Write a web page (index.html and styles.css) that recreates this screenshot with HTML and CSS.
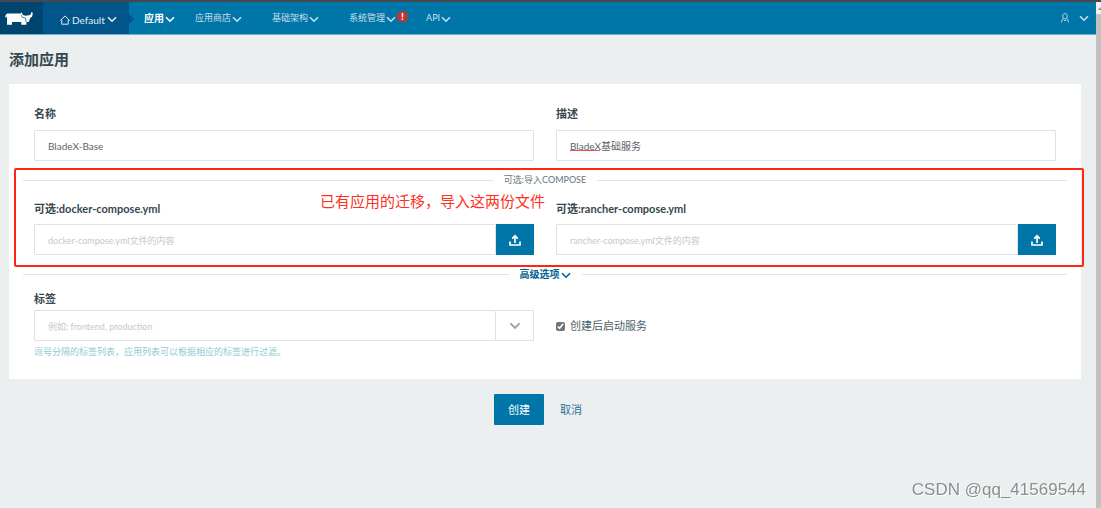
FILE: index.html
```html
<!DOCTYPE html>
<html>
<head>
<meta charset="utf-8">
<title>添加应用</title>
<link rel="stylesheet" href="styles.css">
</head>
<body>
<svg class="defs" aria-hidden="true">
  <symbol id="chevron" viewBox="0 0 10 7"><path d="M1 1.2 5 5.2 9 1.2" fill="none" stroke="currentColor" stroke-width="1.6"/></symbol>
  <symbol id="upload" viewBox="0 0 12 12"><path d="M1 7.500V11h10V7.500M6 9V2M3.200 4.600 6 1.800l2.800 2.800" fill="none" stroke="currentColor" stroke-width="1.700"/></symbol>
</svg>
<div class="window">
  <div class="page">
    <header class="nav">
      <a class="logo" href="#" aria-label="Rancher">
        <svg width="28" height="14" viewBox="0 0 28 14"><path fill="#fff" d="M0 5.200 .9 2.500 2.400 1.600H15.600L16 .6 17 1 17.800 3 20.500 3.800 25.200 3 26.600 0 27.800 .8 27.200 4.400 25.200 6 24.400 8.200 23.600 10H21.400V12.800H16.200V10H7V12.800H2V8.200L2 4.200 1.200 5.600Z"/><path d="M15.900 2.800 17.200 5.200 20.600 6.200 21 10" fill="none" stroke="#00456f" stroke-width=".7"/></svg>
      </a>
      <button class="env" type="button">
        <svg width="10" height="10" viewBox="0 0 10 10"><path d="M.6 5.300 5 .9l4.400 4.400H8.200v3.900H1.800V5.300Z" fill="none" stroke="currentColor"/></svg>
        <span>Default</span>
        <svg class="chev"><use href="#chevron"/></svg>
      </button>
      <nav class="menu">
        <a class="item active" href="#">应用<svg class="chev"><use href="#chevron"/></svg></a>
        <a class="item" href="#">应用商店<svg class="chev"><use href="#chevron"/></svg></a>
        <a class="item" href="#">基础架构<svg class="chev"><use href="#chevron"/></svg></a>
        <a class="item" href="#">系统管理<svg class="chev"><use href="#chevron"/></svg><span class="alert">!</span></a>
        <a class="item" href="#">API<svg class="chev"><use href="#chevron"/></svg></a>
      </nav>
      <button class="user" type="button" aria-label="User">
        <svg width="8" height="10" viewBox="0 0 8 10"><path d="M4 .6C2.600.6 1.700 1.600 1.700 3c0 1.500 1 2.900 2.300 2.900S6.300 4.500 6.300 3C6.300 1.600 5.400.6 4 .6ZM2.600 5.400.9 6.800.6 9.500M5.400 5.400 7.100 6.800l.3 2.700M2.600 6.800 4 8l1.400-1.200" fill="none" stroke="currentColor" stroke-width=".9"/></svg>
        <svg class="chev"><use href="#chevron"/></svg>
      </button>
    </header>
    <main class="content">
      <h1>添加应用</h1>
      <form>
        <div class="panel">
          <div class="columns">
            <div class="field">
              <label for="name">名称</label>
              <input class="text" id="name" type="text" value="BladeX-Base">
            </div>
            <div class="field">
              <label for="desc">描述</label>
              <div class="spelled">
                <input class="text" id="desc" type="text" value="BladeX基础服务" spellcheck="false">
                <span class="typo"></span>
              </div>
            </div>
          </div>
          <section class="compose">
            <div class="divider"><span>可选:导入COMPOSE</span></div>
            <div class="columns">
              <div class="field">
                <label for="docker">可选:docker-compose.yml</label>
                <div class="group">
                  <input class="text" id="docker" type="text" placeholder="docker-compose.yml文件的内容">
                  <button class="upload" type="button" aria-label="Upload"><svg width="12" height="12"><use href="#upload"/></svg></button>
                </div>
              </div>
              <div class="field">
                <label for="rancher">可选:rancher-compose.yml</label>
                <div class="group">
                  <input class="text" id="rancher" type="text" placeholder="rancher-compose.yml文件的内容">
                  <button class="upload" type="button" aria-label="Upload"><svg width="12" height="12"><use href="#upload"/></svg></button>
                </div>
              </div>
            </div>
            <p class="note">已有应用的迁移，导入这两份文件</p>
          </section>
          <div class="divider advanced"><button type="button">高级选项<svg class="chev"><use href="#chevron"/></svg></button></div>
          <div class="columns tags">
            <div class="field">
              <label for="tags">标签</label>
              <div class="group">
                <input class="text" id="tags" type="text" placeholder="例如: frontend, production">
                <button class="drop" type="button" aria-label="Show"><svg width="12" height="8"><use href="#chevron"/></svg></button>
              </div>
              <p class="help">逗号分隔的标签列表，应用列表可以根据相应的标签进行过滤。</p>
            </div>
            <label class="check"><input type="checkbox" checked>创建后启动服务</label>
          </div>
        </div>
        <div class="actions">
          <button class="create" type="submit">创建</button>
          <a class="cancel" href="#">取消</a>
        </div>
      </form>
    </main>
  </div>
  <div class="scrollbar"><svg width="5" height="12" viewBox="0 0 5 12"><path d="M2 8 4.500 5 5 8Z" fill="#888"/></svg></div>
</div>
<div class="watermark">CSDN @qq_41569544</div>
</body>
</html>
```
FILE: styles.css
```css
* { box-sizing: border-box; }
body {
  margin: 0;
  background: #ebeff0;
  color: #36474f;
  font: 10px/16px Lato, "Noto Sans CJK SC", sans-serif;
}
button, input { font: inherit; margin: 0; }
button { border: 0; padding: 0; background: none; color: inherit; cursor: pointer; }
a { color: inherit; text-decoration: none; }
h1, p { margin: 0; }
svg { flex: none; }
.defs { position: absolute; width: 0; height: 0; }
.chev { width: 10px; height: 7px; }

.window { display: flex; min-height: 100vh; border-top: 2px solid #44484c; }
.page { flex: 1; min-width: 0; }
.scrollbar { width: 5px; background: #c1c1c1; }
.scrollbar svg { display: block; width: 5px; background: #f1f1f1; }

.nav {
  display: flex;
  height: 33px;
  background: #0075a8;
  border-bottom: 1px solid #73aeca;
  color: #c8dfea;
}
.logo { display: flex; align-items: center; width: 43px; padding: 2px 0 0 5px; background: #00456f; }
.env {
  position: relative;
  display: flex;
  align-items: center;
  gap: 2px;
  width: 86px;
  padding: 4px 0 0 17px;
  background: #00558b;
  color: #e3edf3;
}
.env .chev { margin-bottom: 2px; }
.env::after {
  content: "";
  position: absolute;
  left: 100%;
  top: 12px;
  border: 5px solid transparent;
  border-left-color: #00558b;
  border-right: 0;
}
.menu { display: flex; flex: 1; gap: 30px; padding-left: 15px; }
.item { position: relative; display: flex; align-items: center; gap: 1px; font-size: 9px; }
.item .chev { margin-top: 2px; }
.item.active { margin-right: -10px; color: #fff; font-size: 10px; font-weight: 700; }
.alert {
  position: absolute;
  left: 100%;
  top: 9px;
  margin-left: 1px;
  width: 11px;
  height: 11px;
  border-radius: 50%;
  background: #c4342f;
  color: #fff;
  font-size: 10px;
  font-weight: 900;
  line-height: 11px;
  text-align: center;
}
.user { display: flex; align-items: center; gap: 10px; padding-right: 7px; }

.content { padding: 14px 15px 0 9px; }
h1 { font-size: 15px; line-height: 20px; font-weight: 700; }
.panel { margin-top: 15px; padding: 22px 25px 19px; background: #fff; }
.columns { display: grid; grid-template-columns: 1fr 1fr; gap: 22px; }
.field > label { display: block; margin-bottom: 8px; font-size: 11px; font-weight: 700; }
.text {
  display: block;
  width: 100%;
  height: 31px;
  padding: 0 13px;
  border: 1px solid #dde3e4;
  border-radius: 1px;
  background: #fff;
  color: #5b6468;
  outline: 0;
}
.text::placeholder { color: #c4c9ce; opacity: 1; font-size: 9px; }
.spelled { position: relative; }
.typo { position: absolute; left: 14px; bottom: 10px; width: 30px; border-bottom: 1px solid #e8505b; }

.compose { position: relative; margin-top: 7px; padding: 4px 0 12px; }
.compose::after {
  content: "";
  position: absolute;
  inset: 0 -28px 0 -20px;
  border: 2px solid #ff2418;
  border-radius: 2px;
  pointer-events: none;
}
.compose .columns { margin-top: 13px; }
.compose .field > label { margin-bottom: 7px; }
.note {
  position: absolute;
  left: 286px;
  top: 23px;
  color: #ff2f23;
  font-size: 15px;
  line-height: 20px;
}
.divider { display: flex; align-items: center; gap: 11px; margin: 0 -11px; color: #66757c; font-size: 9px; }
.divider::before, .divider::after { content: ""; flex: 1; border-top: 1px solid #dfe3e5; }
.divider button { display: flex; align-items: center; gap: 1px; color: #00618f; font-size: 10px; font-weight: 700; }
.divider .chev { margin-top: 2px; }
.advanced { margin-top: -1px; }
.group { display: flex; }
.group .text { flex: 1; min-width: 0; }
.upload { display: flex; align-items: center; justify-content: center; width: 38px; background: #0075a8; color: #fff; }
.drop {
  display: flex;
  align-items: center;
  justify-content: center;
  width: 38px;
  border: 1px solid #dde3e4;
  border-left: 0;
  color: #99a1a5;
}
.tags { margin-top: 9px; }
.tags .field > label { margin-bottom: 3px; }
.help { margin-top: 3px; color: #8bcbd3; font-size: 9px; }
.check { display: flex; align-items: center; align-self: start; gap: 5px; margin-top: 27px; font-size: 11px; color: #4d5e68; }
.check input { width: 9px; height: 9px; margin: 0; accent-color: #737373; }
.actions { display: flex; justify-content: center; align-items: center; gap: 16px; margin-top: 15px; padding-right: 14px; }
.create { width: 50px; height: 31px; border-radius: 1px; background: #0075a8; color: #fff; font-size: 11px; }
.cancel { color: #2d7197; font-size: 11px; }
.watermark {
  position: fixed;
  right: 15px;
  bottom: 8px;
  color: #8b8e8f;
  font: 17px/20px "Liberation Sans", sans-serif;
  text-shadow: 1px 1px 0 #fff;
}
```
